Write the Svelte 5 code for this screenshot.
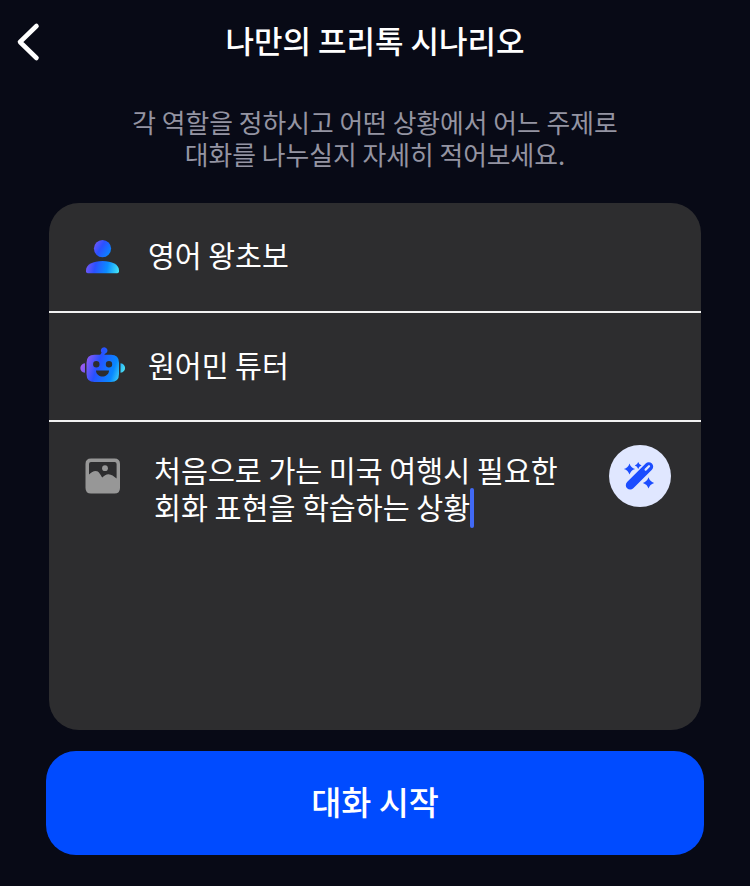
<script>
  let title = "나만의 프리톡 시나리오";
  let guide = ["각 역할을 정하시고 어떤 상황에서 어느 주제로", "대화를 나누실지 자세히 적어보세요."];
  let myRole = "영어 왕초보";
  let aiRole = "원어민 튜터";
  let situation = ["처음으로 가는 미국 여행시 필요한", "회화 표현을 학습하는 상황"];
</script>

<main class="screen">
  <header>
    <button class="back" aria-label="뒤로">
      <svg width="26" height="40" viewBox="0 0 26 40">
        <path d="M21.5 4L5 20L21.5 36" />
      </svg>
    </button>
    <h1>{title}</h1>
  </header>

  <p class="guide">{guide[0]}<br />{guide[1]}</p>

  <section class="card">
    <div class="row">
      <svg class="icon" width="48" height="48" viewBox="0 0 48 48">
        <defs>
          <linearGradient id="head" x1="0" y1="0" x2="1" y2="0.6">
            <stop offset="0" stop-color="#8058f5" />
            <stop offset="0.5" stop-color="#2b50ff" />
            <stop offset="1" stop-color="#0b82ff" />
          </linearGradient>
          <linearGradient id="body" gradientUnits="userSpaceOnUse" x1="7" y1="31" x2="41" y2="38">
            <stop offset="0" stop-color="#8058f5" />
            <stop offset="0.3" stop-color="#2b50ff" />
            <stop offset="0.65" stop-color="#0b8cff" />
            <stop offset="1" stop-color="#45e6f5" />
          </linearGradient>
        </defs>
        <circle cx="24.5" cy="15.6" r="8.6" fill="url(#head)" />
        <path
          d="M8 37.5C8 31.5 15 28 24.5 28S41 31.5 41 37.5V38.5Q41 40.3 39.2 40.3H9.8Q8 40.3 8 38.5Z"
          fill="url(#body)"
        />
      </svg>
      <p>{myRole}</p>
    </div>

    <div class="row">
      <svg class="icon" width="48" height="48" viewBox="0 0 48 48">
        <defs>
          <linearGradient id="bot" gradientUnits="userSpaceOnUse" x1="5" y1="17" x2="46" y2="31">
            <stop offset="0" stop-color="#a35cf0" />
            <stop offset="0.36" stop-color="#2850ff" />
            <stop offset="0.74" stop-color="#0888ff" />
            <stop offset="1" stop-color="#50e8f0" />
          </linearGradient>
        </defs>
        <g fill="url(#bot)">
          <path
            fill-rule="evenodd"
            d="M16.5 11.8H22.2L23.6 9.7A3.3 3.3 0 1 1 27 10.8L26.3 11.8H33Q41 11.8 41 19.8V31Q41 39 33 39H16.5Q8.5 39 8.5 31V19.8Q8.5 11.8 16.5 11.8ZM18.3 18A3.2 3.2 0 1 0 18.3 24.4A3.2 3.2 0 1 0 18.3 18ZM31 18A3.2 3.2 0 1 0 31 24.4A3.2 3.2 0 1 0 31 18ZM18 27.5V28C18.8 35.3 30.2 35.3 31 28V27.5Z"
          />
          <path d="M7 20.2V29.8C0.8 29.1 0.8 20.9 7 20.2Z" />
          <path d="M42.5 20.2V29.8C48.6 29.1 48.6 20.9 42.5 20.2Z" />
        </g>
      </svg>
      <p>{aiRole}</p>
    </div>

    <div class="row situation">
      <svg class="icon" width="48" height="48" viewBox="0 0 48 48">
        <path
          fill="#979797"
          fill-rule="evenodd"
          d="M13 6.5H36.5Q42 6.5 42 12V36Q42 41.5 36.5 41.5H13Q7.5 41.5 7.5 36V12Q7.5 6.5 13 6.5ZM11 22.5C13.5 20.5 15 19 17.7 19C21 19 22.3 22.6 24.3 25.6C26.2 23.6 28 22.3 30.5 22.3C33.5 22.3 35.8 24.5 38.6 26.5V12Q38.6 10 36.6 10H13Q11 10 11 12Z"
        />
        <circle cx="27" cy="16.2" r="2.9" fill="#979797" />
      </svg>
      <p>{situation[0]}<br />{situation[1]}<span class="caret"></span></p>
      <button class="magic" aria-label="자동 완성">
        <svg width="36" height="36" viewBox="0 0 36 36" fill="#1c4dff">
          <path d="M8.2 27.2L26.8 8.6" fill="none" stroke="#1c4dff" stroke-width="8.8" stroke-linecap="round" />
          <path d="M23.6 11.6L27 8.2" fill="none" stroke="#e0e7ff" stroke-width="2.2" stroke-linecap="round" />
          <path d="M7.5 5.4Q8.8 9.6 13.1 11Q8.8 12.4 7.5 16.6Q6.2 12.4 1.9 11Q6.2 9.6 7.5 5.4Z" />
          <path d="M16.2 3.9Q17 6.6 19.6 7.4Q17 8.2 16.2 10.9Q15.4 8.2 12.8 7.4Q15.4 6.6 16.2 3.9Z" />
          <path d="M26.5 19.2Q27.8 23.5 32.1 24.9Q27.8 26.3 26.5 30.6Q25.2 26.3 20.9 24.9Q25.2 23.5 26.5 19.2Z" />
        </svg>
      </button>
    </div>
  </section>

  <button class="start">대화 시작</button>
</main>

<style>
  :global(body) {
    background: #080a16;
  }

  .screen {
    box-sizing: border-box;
    width: 750px;
    height: 886px;
    overflow: hidden;
    background: #080a16;
    color: #fff;
    font-family: "Noto Sans CJK KR", sans-serif;
  }

  button {
    border: none;
    padding: 0;
    cursor: pointer;
    font-family: inherit;
    color: inherit;
  }

  h1,
  p {
    margin: 0;
  }

  header {
    display: grid;
    grid-template-columns: 60px 1fr 60px;
    align-items: center;
    height: 84px;
  }

  .back {
    display: flex;
    padding-left: 15px;
    background: none;
  }

  .back path {
    fill: none;
    stroke: #fff;
    stroke-width: 4.6;
    stroke-linecap: round;
    stroke-linejoin: round;
  }

  h1 {
    padding-bottom: 4px;
    font-size: 31px;
    font-weight: 500;
    line-height: 44px;
    text-align: center;
  }

  .guide {
    margin-top: 22px;
    color: #9494a2;
    font-size: 25.8px;
    line-height: 32px;
    text-align: center;
  }

  .card {
    display: flex;
    flex-direction: column;
    box-sizing: border-box;
    width: 652px;
    height: 527px;
    margin: 33px auto 0;
    border-radius: 30px;
    background: #2d2d2f;
    overflow: hidden;
  }

  .row {
    display: flex;
    align-items: center;
    box-sizing: border-box;
    height: 110px;
    padding: 0 30px 0 29px;
    border-bottom: 2px solid #f2f2f2;
    font-size: 29.2px;
    line-height: 37px;
  }

  .row:nth-child(2) {
    height: 109px;
  }

  .row .icon {
    flex: none;
    margin-right: 22px;
  }

  .row p {
    padding-bottom: 5px;
  }

  .situation {
    flex: 1;
    align-items: flex-start;
    border-bottom: none;
    padding-top: 30px;
  }

  .situation p {
    flex: 1;
    margin: -1px 0 0 6px;
    font-size: 29.3px;
  }

  .caret {
    display: inline-block;
    width: 4px;
    height: 40px;
    margin: -12px 0 -4px;
    border-radius: 2px;
    background: #4169f5;
    vertical-align: -5px;
  }

  .magic {
    display: grid;
    place-items: center;
    width: 62px;
    height: 62px;
    margin-top: -7px;
    border-radius: 50%;
    background: #e0e7ff;
  }

  .start {
    display: block;
    width: 658px;
    height: 104px;
    margin: 21px auto 0;
    padding-bottom: 5px;
    border-radius: 30px;
    background: #004bff;
    font-size: 32.7px;
    font-weight: 500;
  }
</style>
